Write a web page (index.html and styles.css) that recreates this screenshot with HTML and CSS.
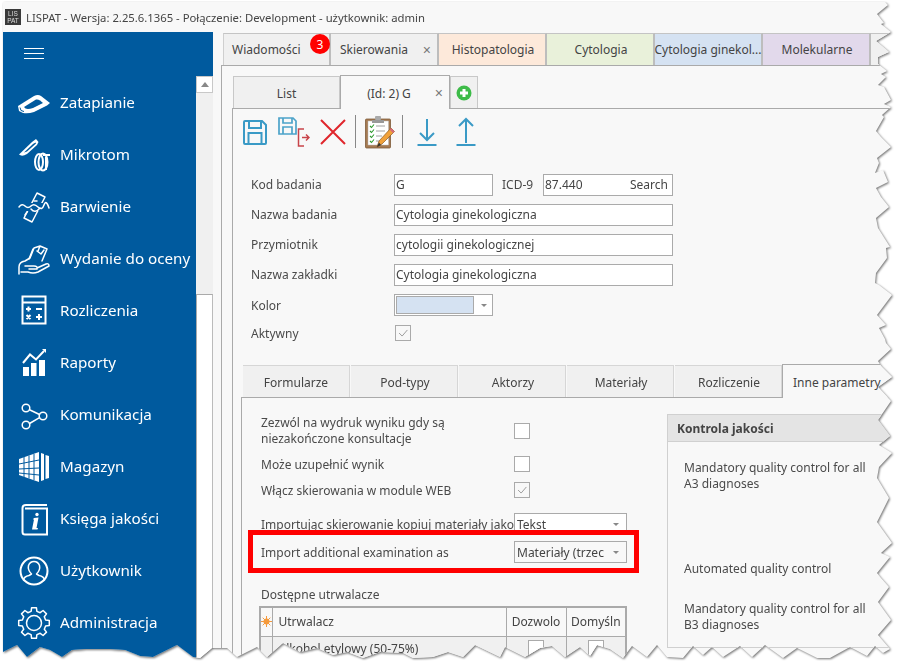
FILE: index.html
```html
<!DOCTYPE html>
<html lang="pl">
<head>
<meta charset="utf-8">
<title>LISPAT</title>
<link rel="stylesheet" href="styles.css">
</head>
<body>
<div class="frame">
<div class="app">
  <header class="titlebar">
    <div class="applogo"><span>LIS</span><span>PAT</span></div>
    <div class="apptitle">LISPAT - Wersja: 2.25.6.1365 - Połączenie: Development - użytkownik: admin</div>
  </header>
  <div class="main">
    <aside class="sidebar">
      <div class="burgerbar"><div class="burger"><i></i><i></i><i></i></div></div>
      <div class="sidebody">
        <nav class="nav">
          <a class="navitem"><svg class="navicon" viewBox="0 0 36 36"><path class="fw" d="M2 21 L18 11 Q22 9 25 11 L34 18 L31 20.500 L18 27 Q12 29 7 28 L3 26 Z"/><path class="bl" d="M8 22 L20 14.500 Q22 14 24 15.500 L27 18 L17 23 Q12 24.500 9.500 23.500 Z"/><path class="blc" d="M4 22.500 L5 25.500 L8 26.500"/></svg><span>Zatapianie</span></a>
          <a class="navitem"><svg class="navicon" viewBox="0 0 36 36"><path class="fw" d="M3 17.500 L16 5 L20 2 L22.500 5 L21 8 L11 17 Q6 20 3 17.500 Z"/><path class="bl" d="M8 15.500 L17 7 L19.500 5.500 L20 6.500 L11 14.500 Z"/><ellipse class="ol2" cx="23" cy="25" rx="4" ry="8"/><ellipse class="ol2" cx="27" cy="25" rx="4.500" ry="8.500"/><path class="ol2" d="M27 18 H34 M30 20 V33"/></svg><span>Mikrotom</span></a>
          <a class="navitem"><svg class="navicon" viewBox="0 0 36 36"><path class="ol" d="M21 4 L29 8 L16 33 L8 29 Z"/><path class="bl" d="M3 14 H34 V22 H3 Z"/><path class="ol" d="M3 18 Q6 14 9 17 T15 17 T22 18 T28 16 T33 19"/><path class="ol" d="M15 20 Q19 25 24 19"/><path class="ol" d="M18 12 L21 12 M11 23 L9 26"/></svg><span>Barwienie</span></a>
          <a class="navitem"><svg class="navicon" viewBox="0 0 36 36"><path class="ol" d="M3 33 V26 Q3 21 9 20 L14 17 L18 7 L24 5 L22 10 M24 5 L31 8 L26 20"/><path class="ol" d="M17 8 L13 18 M21 10 L25 13 L28 9"/><path class="ol" d="M9 25 H18 Q22 25 21 28 H13 M21 27 L30 23 Q33 22 33 25 L22 31 Q17 33 12 31 L5 31"/></svg><span>Wydanie do oceny</span></a>
          <a class="navitem"><svg class="navicon" viewBox="0 0 36 36"><rect class="ol2" x="6.500" y="3.500" width="23" height="27"/><path class="ol2" d="M6.500 9.500 H29.500 M10 16 H15 M12.500 13.500 V18.500 M20 16 H26 M10.500 22 L14.500 26 M14.500 22 L10.500 26 M20 24 H26 M23 21 V27"/></svg><span>Rozliczenia</span></a>
          <a class="navitem"><svg class="navicon" viewBox="0 0 36 36"><rect class="fw" x="7" y="22" width="6" height="9"/><rect class="fw" x="15" y="18" width="5.500" height="13"/><rect class="fw" x="23" y="15" width="6" height="16"/><path class="ol2" d="M7 18 L14 9.500 L20 14.500 L28 6"/><path class="fw" d="M26 4 L30 4 L30 8 Z"/></svg><span>Raporty</span></a>
          <a class="navitem"><svg class="navicon" viewBox="0 0 36 36"><circle class="ol" cx="10" cy="11" r="3.800"/><circle class="ol" cx="27" cy="19" r="3.800"/><circle class="ol" cx="10" cy="28" r="3.800"/><path class="ol" d="M13.500 12.700 L23.500 17.500 M13.500 26.500 L23.500 20.700"/></svg><span>Komunikacja</span></a>
          <a class="navitem"><svg class="navicon" viewBox="0 0 36 36"><path class="fw" d="M3 10 L23 3 V33 L3 26 Z"/><path class="grid" d="M8 8 V28 M13 6.500 V29.500 M18 5 V31 M3 15 L23 11 M3 20 L23 19 M3 24 L23 26"/><path class="fw" d="M25 4 L28 5 V31 L25 32 Z M29.500 6 L33 7 V29 L29.500 30 Z"/></svg><span>Magazyn</span></a>
          <a class="navitem"><svg class="navicon" viewBox="0 0 36 36"><path class="ol2" d="M31 4 H10 Q6.500 4 6.500 7 V31 Q6.500 33.500 9 33.500 H31 V7.500 H9"/><path class="fw" d="M18 17 L22.500 16.500 L20.500 27 L22 27 L21.500 28.500 L16 28.500 L18 18.500 L16.800 18.500 Z"/><circle class="fw" cx="21" cy="13.500" r="1.700"/></svg><span>Księga jakości</span></a>
          <a class="navitem"><svg class="navicon" viewBox="0 0 36 36"><circle class="ol2" cx="18" cy="18" r="13.500"/><path class="ol" d="M7.500 27 Q8 23.500 13 22.500 L15.500 21 Q11.500 17 12.500 12.500 Q14 8.500 18 8.500 Q22 8.500 23.500 12.500 Q24.500 17 20.500 21 L23 22.500 Q28 23.500 28.500 27"/></svg><span>Użytkownik</span></a>
          <a class="navitem"><svg class="navicon" viewBox="0 0 36 36"><g transform="translate(18 18)"><polygon class="ol" points="-2.900,-11.600 -2.400,-15.300 2.400,-15.300 2.900,-11.600 6.200,-10.300 9.100,-12.500 12.500,-9.100 10.300,-6.200 11.600,-2.900 15.300,-2.400 15.300,2.400 11.600,2.900 10.300,6.200 12.500,9.100 9.100,12.500 6.200,10.300 2.900,11.600 2.400,15.300 -2.400,15.300 -2.900,11.600 -6.200,10.300 -9.100,12.500 -12.500,9.100 -10.300,6.200 -11.600,2.900 -15.300,2.400 -15.300,-2.400 -11.600,-2.900 -10.300,-6.200 -12.500,-9.100 -9.100,-12.500 -6.200,-10.300"/><circle class="ol" r="7.500"/></g></svg><span>Administracja</span></a>
        </nav>
        <div class="scrollbar">
          <div class="scrollup"><i></i></div>
          <div class="scrolltrack"></div>
          <div class="scrollthumb"></div>
        </div>
      </div>
    </aside>

    <section class="workspace">
      <div class="tabstrip">
        <div class="mtab mtab-plain">Wiadomości<b class="badge">3</b></div>
        <div class="mtab mtab-plain">Skierowania<span class="closex">×</span></div>
        <div class="mtab mtab-histo">Histopatologia</div>
        <div class="mtab mtab-cyto">Cytologia</div>
        <div class="mtab mtab-gin">Cytologia ginekol...</div>
        <div class="mtab mtab-mol">Molekularne</div>
        <div class="mtab mtab-plain"></div>
      </div>
      <div class="outerpanel">
        <div class="innertabs">
          <div class="itab">List</div>
          <div class="itab itab-active">(Id: 2) G<span class="closex">×</span></div>
          <div class="itab itab-add"><svg width="16" height="16" viewBox="0 0 16 16"><circle cx="8" cy="8" r="7.500" fill="#3dbb48"/><path d="M8 4 V12 M4 8 H12" stroke="#fff" stroke-width="3"/></svg></div>
        </div>
        <div class="innerbody">
          <div class="toolbar">
            <svg class="tb tb-save" viewBox="0 0 24 36"><path class="ic-blue" d="M1 8 Q1 7 2 7 H19 L23 11 V29 Q23 30 22 30 H2 Q1 30 1 29 Z"/><path class="ic-blue" d="M6 7 V14 H18 V7 M5.500 30 V19 H18.500 V30"/></svg>
            <svg class="tb tb-saveexit" viewBox="0 0 32 36"><path class="ic-lblue" d="M1 4 H15 L18 7 V20 H1 Z"/><path class="ic-lblue" d="M5 4 V9 H14 V4 M5 20 V13 H14 V20"/><path class="ic-red" d="M26 15 H20.500 V32 H26 M24 23.500 H31 M28 20.500 L31 23.500 L28 26.500"/></svg>
            <svg class="tb tb-x" viewBox="0 0 26 36"><path class="ic-x" d="M1 6 L25 30 M25 6 L1 30"/></svg>
            <div class="tbsep tbsep-a"></div>
            <svg class="tb tb-clip" viewBox="0 0 30 36"><rect x="0.500" y="5" width="25" height="29" rx="1" fill="#a57a52" stroke="#7d5a38" stroke-width="0.800"/><rect x="3" y="7" width="20.500" height="24" fill="#fff" stroke="#bbb" stroke-width="0.500"/><path d="M7 6 H19 V9 H7 Z" fill="#999"/><rect x="10" y="2" width="6" height="4" rx="1" fill="#aaa"/><path d="M5 12 L6.500 13.500 L9 10.500 M5 17 L6.500 18.500 L9 15.500 M5 22 L6.500 23.500 L9 20.500 M5 27 L6.500 28.500 L9 25.500" fill="none" stroke="#2f9a2f" stroke-width="1.100"/><path d="M11 12 H20 M11 17 H20 M11 22 H17 M11 27 H14" stroke="#888" stroke-width="0.800"/><path d="M12 33 L14 27 L26 14 L29.500 17.500 L17 30 Z" fill="#f1a13a" stroke="#8a5a22" stroke-width="0.700"/><path d="M26 14 L29.500 17.500 L28 19 L24.500 15.500 Z" fill="#d66a7a"/><path d="M12 33 L14 28.500 L16 31 Z" fill="#333"/></svg>
            <div class="tbsep tbsep-b"></div>
            <svg class="tb tb-down" viewBox="0 0 20 36"><path class="ic-blue" d="M10 5 V26 M3 19 L10 26 L17 19"/><path class="ic-bar" d="M0.500 31 H19.500"/></svg>
            <svg class="tb tb-up" viewBox="0 0 20 36"><path class="ic-blue" d="M10 29 V5 M3 12 L10 5 L17 12"/><path class="ic-bar" d="M0.500 31 H19.500"/></svg>
          </div>

          <div class="form">
            <div class="frow frow-text">
              <label class="flabel">Kod badania</label>
              <div class="field field-short">G</div>
              <label class="icd">ICD-9</label>
              <div class="field field-icd"><span>87.440</span><span>Search</span></div>
            </div>
            <div class="frow frow-text"><label class="flabel">Nazwa badania</label><div class="field field-long">Cytologia ginekologiczna</div></div>
            <div class="frow frow-text"><label class="flabel">Przymiotnik</label><div class="field field-long">cytologii ginekologicznej</div></div>
            <div class="frow frow-text"><label class="flabel">Nazwa zakładki</label><div class="field field-long">Cytologia ginekologiczna</div></div>
            <div class="frow"><label class="flabel">Kolor</label><div class="field field-short field-color"><div class="swatch"></div><i class="caret"></i></div></div>
            <div class="frow frow-check"><label class="flabel">Aktywny</label><div class="check check-a"><svg viewBox="0 0 16 16"><path d="M3.500 8 L7 11.500 L13 4.500" fill="none" stroke="#999" stroke-width="1.100"/></svg></div></div>
          </div>

          <div class="subtabs">
            <div class="stab">Formularze</div>
            <div class="stab">Pod-typy</div>
            <div class="stab">Aktorzy</div>
            <div class="stab">Materiały</div>
            <div class="stab">Rozliczenie</div>
            <div class="stab stab-active">Inne parametry</div>
          </div>
          <div class="subpanel">
            <div class="leftcol">
              <div class="prow prow-two"><div class="plabel">Zezwól na wydruk wyniku gdy są<br>niezakończone konsultacje</div><div class="check"></div></div>
              <div class="prow prow-b"><div class="plabel">Może uzupełnić wynik</div><div class="check"></div></div>
              <div class="prow prow-c"><div class="plabel">Włącz skierowania w module WEB</div><div class="check"><svg viewBox="0 0 16 16"><path d="M3.500 8 L7 11.500 L13 4.500" fill="none" stroke="#999" stroke-width="1.100"/></svg></div></div>
              <div class="prow prow-d"><div class="plabel plabel-clip">Importując skierowanie kopiuj materiały jako</div><div class="combo"><span>Tekst</span><i class="caret"></i></div></div>
              <div class="prow prow-e"><div class="plabel">Import additional examination as</div><div class="combo"><span>Materiały (trzec</span><i class="caret"></i></div></div>
              <div class="redbox"></div>
              <div class="gridtitle">Dostępne utrwalacze</div>
              <table class="ugrid">
                <tr class="ghead">
                  <th class="gstar"><svg width="11" height="11" viewBox="0 0 11 11"><circle cx="5.500" cy="5.500" r="3" fill="#f59a3c"/><path d="M5.500 0 V11 M0 5.500 H11 M1.700 1.700 L9.300 9.300 M9.300 1.700 L1.700 9.300" stroke="#f59a3c" stroke-width="1"/></svg></th>
                  <th class="gname">Utrwalacz</th>
                  <th class="gcol">Dozwolo</th>
                  <th class="gcol">Domyśln</th>
                </tr>
                <tr class="grow">
                  <td></td>
                  <td class="gname">Alkohol etylowy (50-75%)</td>
                  <td class="gcell"><div class="check gcheck"></div></td>
                  <td class="gcell"><div class="check gcheck"></div></td>
                </tr>
              </table>
            </div>
            <div class="qc">
              <div class="qchead">Kontrola jakości</div>
              <div class="qcbody">
                <p class="qcp qcp-a">Mandatory quality control for all<br>A3 diagnoses</p>
                <p class="qcp qcp-b">Automated quality control</p>
                <p class="qcp qcp-c">Mandatory quality control for all<br>B3 diagnoses</p>
              </div>
            </div>
          </div>
        </div>
      </div>
    </section>
  </div>
</div>
</div>
</body>
</html>
```
FILE: styles.css
```css
* { box-sizing: border-box; }
html, body { margin: 0; height: 668px; overflow: hidden; background: #fff; }
body { font-family: "Noto Sans", Tahoma, sans-serif; font-size: 12px; color: #4a4a4a; }

.frame { width: 901px; height: 668px; filter: drop-shadow(1px 1px 1px rgba(0,0,0,.55)); }
.app {
  width: 901px; height: 668px; padding: 2px 0 0 3px; background: #f8f8f8; overflow: hidden;
  display: flex; flex-direction: column;
  clip-path: polygon(3px 2px, 885px 2px, 888px 5px, 877px 14px, 884px 23px, 881px 24px, 891px 32px, 876px 41px, 889px 52px, 878px 57px, 878px 64px, 887px 71px, 881px 74px, 886px 77px, 878px 85px, 884px 87px, 891px 100px, 884px 104px, 891px 107px, 882px 115px, 884px 117px, 876px 131px, 881px 137px, 891px 147px, 877px 158px, 879px 163px, 875px 173px, 883px 170px, 888px 182px, 876px 188px, 881px 197px, 889px 207px, 876px 218px, 878px 228px, 890px 247px, 886px 248px, 887px 258px, 876px 273px, 875px 283px, 879px 285px, 892px 295px, 877px 315px, 886px 325px, 879px 328px, 885px 339px, 886px 343px, 891px 349px, 878px 361px, 881px 366px, 892px 377px, 878px 387px, 891px 401px, 878px 420px, 890px 436px, 879px 445px, 892px 453px, 879px 467px, 877px 478px, 889px 498px, 877px 522px, 892px 543px, 881px 553px, 890px 557px, 877px 573px, 881px 578px, 889px 587px, 878px 602px, 891px 620px, 878px 635px, 890px 649px, 883px 653px, 875px 646px, 867px 656px, 850px 647px, 830px 658px, 817px 658px, 797px 648px, 783px 658px, 765px 645px, 752px 657px, 740px 646px, 723px 657px, 712px 647px, 703px 655px, 693px 646px, 683px 658px, 667px 657px, 657px 645px, 647px 657px, 632px 646px, 623px 658px, 610px 649px, 597px 645px, 590px 656px, 580px 647px, 565px 657px, 552px 646px, 540px 648px, 525px 657px, 505px 647px, 500px 657px, 475px 645px, 463px 657px, 448px 652px, 433px 657px, 413px 658px, 403px 653px, 380px 652px, 363px 658px, 347px 652px, 333px 655px, 317px 648px, 300px 652px, 283px 643px, 267px 657px, 257px 647px, 237px 657px, 227px 648px, 212px 648px, 200px 658px, 193px 657px, 177px 645px, 153px 657px, 140px 656px, 125px 650px, 110px 649px, 85px 649px, 72px 650px, 62px 657px, 50px 650px, 40px 647px, 27px 657px, 17px 645px, 3px 652px);
}

/* title bar */
.titlebar { height: 30px; flex: none; display: flex; align-items: center; padding-left: 2px; }
.applogo { width: 16px; height: 16px; background: #3a3a3a; color: #ddd; font-size: 6.500px; line-height: 7px; display: flex; flex-direction: column; align-items: center; justify-content: center; font-family: "Liberation Sans", sans-serif; }
.apptitle { margin-left: 5px; white-space: nowrap; color: #444; font-size: 11.300px; }

.main { flex: 1; display: flex; min-height: 0; }

/* sidebar */
.sidebar { width: 210px; flex: none; display: flex; flex-direction: column; }
.burgerbar { height: 44px; background: #005a9e; padding: 16px 0 0 21px; flex: none; }
.burger { width: 20px; }
.burger i { display: block; height: 1px; background: #fff; margin-bottom: 4px; }
.sidebody { flex: 1; display: flex; min-height: 0; }
.nav { width: 193px; background: #005a9e; padding-top: 1px; }
.navitem { height: 52px; display: flex; align-items: center; padding-left: 13px; color: #fff; font-size: 15.200px; white-space: nowrap; }
.navitem span { padding-bottom: 2px; }
.navicon { width: 36px; height: 36px; flex: none; margin-right: 8px; }
.navicon .fw { fill: #fff; }
.navicon .bl { fill: #005a9e; }
.navicon .blc { fill: none; stroke: #005a9e; stroke-width: 1; }
.navicon .ol { fill: none; stroke: #fff; stroke-width: 1.500; stroke-linejoin: round; stroke-linecap: round; }
.navicon .ol2 { fill: none; stroke: #fff; stroke-width: 2; }
.navicon .grid { fill: none; stroke: #005a9e; stroke-width: 1; }

.scrollbar { width: 17px; display: flex; flex-direction: column; }
.scrollup { height: 17px; background: #fff; border: 1px solid #c8c8c8; display: flex; align-items: center; justify-content: center; flex: none; }
.scrollup i { width: 0; height: 0; border-left: 4px solid transparent; border-right: 4px solid transparent; border-bottom: 5px solid #888; }
.scrolltrack { height: 201px; background: #f0f0f0; flex: none; }
.scrollthumb { flex: 1; background: #fff; border: 1px solid #aaa; border-bottom: 0; border-right-color: #bbb; }

/* main workspace */
.workspace { flex: 1; min-width: 0; padding-left: 8px; display: flex; flex-direction: column; overflow: hidden; }
.tabstrip { height: 33px; flex: none; padding: 1px 0 0 2px; display: flex; }
.mtab { width: 108px; flex: none; height: 32px; padding-left: 2px; border-top: 1px solid #c4c4c4; border-right: 2px solid #bdbdbd; display: flex; align-items: center; justify-content: center; position: relative; color: #444; white-space: nowrap; }
.mtab-plain { background: #f0f0f0; }
.mtab-plain:first-child { border-left: 1px solid #cfcfcf; justify-content: flex-start; padding-left: 8px; }
.mtab-plain:nth-child(2) { justify-content: flex-start; padding-left: 9px; }
.mtab-histo { background: #fde9da; }
.mtab-cyto { background: #e9f1da; }
.mtab-gin { background: #d5e2f2; padding-left: 0; }
.mtab-mol { background: #e2d9eb; }
.badge { position: absolute; left: 86px; top: 0; width: 20px; height: 20px; border-radius: 50%; background: #f00; color: #fff; font-weight: 400; font-size: 12px; display: flex; align-items: center; justify-content: center; }
.closex { position: absolute; right: 6px; top: 50%; margin-top: -9px; font-size: 14px; line-height: 18px; color: #777; font-family: "Liberation Sans", sans-serif; }

.outerpanel { flex: 1; min-height: 0; border-left: 1px solid #aaa; border-top: 1px solid #aaa; padding-left: 10px; display: flex; flex-direction: column; }
.innertabs { flex: none; height: 32px; margin-top: 10px; padding-left: 1px; display: flex; }
.itab { height: 32px; padding-top: 2px; background: #f0f0f0; border: 1px solid #c8c8c8; border-bottom: 0; display: flex; align-items: center; justify-content: center; width: 107px; color: #444; position: relative; flex: none; }
.itab-active { width: 110px; height: 34px; margin-top: -1px; background: #f8f8f8; border-color: #aaa; padding-right: 12px; position: relative; z-index: 1; margin-bottom: -1px; }
.itab-add { width: 28px; padding-top: 0; }

.innerbody { flex: 1; min-height: 0; border-left: 1px solid #aaa; border-top: 1px solid #aaa; padding-left: 10px; }
.toolbar { height: 36px; margin-top: 5px; display: flex; }
.tb { flex: none; height: 36px; }
.tb-save { width: 24px; }
.tb-saveexit { width: 32px; margin-left: 11px; }
.tb-x { width: 26px; margin-left: 10px; }
.tb-clip { width: 30px; margin-left: 9px; }
.tb-down { width: 20px; margin-left: 14px; }
.tb-up { width: 20px; margin-left: 19px; }
.tbsep { width: 1px; height: 33px; margin-top: 1px; background: #888; flex: none; }
.tbsep-a { margin-left: 9px; }
.tbsep-b { margin-left: 7px; }
.ic-blue { fill: none; stroke: #3a9ac6; stroke-width: 2; }
.ic-lblue { fill: none; stroke: #4ca3c9; stroke-width: 1.700; }
.ic-red { fill: none; stroke: #c8444a; stroke-width: 1.500; }
.ic-x { fill: none; stroke: #e0262c; stroke-width: 2; }
.ic-bar { fill: none; stroke: #3a9ac6; stroke-width: 2; }

/* header form */
.form { margin: 24px 0 0 8px; }
.frow { display: flex; align-items: center; height: 22px; margin-bottom: 8px; }
.frow-check { height: 16px; margin: 9px 0 0; }
.flabel { width: 143px; flex: none; color: #4a4a4a; }
.field { height: 22px; border: 1px solid #aaa; background: #fff; padding: 0 1px; display: flex; align-items: center; color: #444; flex: none; white-space: nowrap; }
.frow-text .flabel, .frow-text .icd { padding-bottom: 2px; }
.frow-text .field { padding-bottom: 2px; }
.field-short { width: 99px; }
.field-long { width: 279px; }
.field-icd { width: 130px; justify-content: space-between; padding-right: 4px; }
.icd { width: 50px; padding-left: 9px; flex: none; }
.field-color { padding: 1px; position: relative; }
.swatch { width: 78px; height: 18px; background: #d5e2f2; border: 1px solid #aaa; }
.caret { width: 0; height: 0; border-left: 3px solid transparent; border-right: 3px solid transparent; border-top: 3px solid #888; flex: none; }
.field-color .caret { margin-left: 7px; }
.check { width: 16px; height: 16px; border: 1px solid #aaa; background: #fff; flex: none; }
.check svg { display: block; width: 14px; height: 14px; }
.check-a { margin-left: 1px; background: #f8f8f8; }
.prow .check svg { background: #f8f8f8; }

/* sub tabs */
.subtabs { display: flex; height: 33px; margin: 23px 0 0 -2px; padding-left: 2px; }
.stab { width: 107px; height: 32px; margin: 1px 1px 0 0; padding: 2px 0 0 2px; flex: none; background: #f0f0f0; border-top: 1px solid #d6d6d6; border-right: 1px solid #d6d6d6; display: flex; align-items: center; justify-content: center; color: #444; }
.stab:first-child { padding-left: 0; }
.stab-active { margin: 0 0 0 -1px; width: 130px; height: 34px; background: #f8f8f8; border: 1px solid #aaa; border-bottom: 0; position: relative; z-index: 1; white-space: nowrap; justify-content: flex-start; padding-left: 10px; }
.subpanel { margin-left: -2px; height: 272px; border-left: 1px solid #aaa; border-top: 1px solid #aaa; display: flex; }
.leftcol { width: 386px; flex: none; padding: 17px 0 0 19px; position: relative; }
.prow { display: flex; align-items: center; height: 22px; }
.prow-two { height: 31px; line-height: 16px; }
.prow-b { margin-top: 7px; }
.prow-c { margin-top: 4px; }
.prow-d { margin-top: 12px; }
.prow-e { margin-top: 6px; }
.plabel { width: 253px; flex: none; white-space: nowrap; color: #4a4a4a; }
.plabel-clip { overflow: hidden; }
.combo { width: 113px; height: 22px; border: 1px solid #aaa; background: #fff; display: flex; align-items: center; justify-content: space-between; padding: 0 7px 0 2px; color: #444; flex: none; }
.combo span { white-space: nowrap; }
.prow-e .combo { background: #f8f8f8; }
.redbox { position: absolute; left: 6px; top: 132px; width: 391px; height: 43px; border: 5px solid #f00; pointer-events: none; }
.gridtitle { margin-top: 22px; height: 20px; line-height: 20px; }
.ugrid { border-collapse: collapse; width: 368px; table-layout: fixed; margin-top: 1px; margin-left: -2px; border: 2px solid #aaa; }
.ugrid th, .ugrid td { border: 1px solid #aaa; padding: 0; font-weight: 400; color: #444; text-align: center; white-space: nowrap; overflow: hidden; }
.ghead { height: 29px; }
.gstar { width: 12px; }
.gstar svg { display: block; margin: 0 auto; }
.ugrid .gname { text-align: left; padding-left: 6px; }
.gcol { width: 60px; }
.grow { height: 26px; background: #f0f0f0; }
.ugrid .gcell { vertical-align: top; }
.gcheck { margin: 3px auto 0; }

/* quality panel */
.qc { width: 300px; flex: none; margin: 16px 0 0 39px; height: 234px; border: 1px solid #d0d0d0; }
.qchead { height: 27px; background: #e4e4e4; border-bottom: 1px solid #d0d0d0; font-weight: 700; padding-left: 9px; line-height: 28px; color: #444; }
.qcbody { padding-left: 16px; }
.qcp { margin: 0; line-height: 16px; color: #4a4a4a; }
.qcp-a { margin-top: 18px; }
.qcp-b { margin-top: 69px; }
.qcp-c { margin-top: 24px; }
```
